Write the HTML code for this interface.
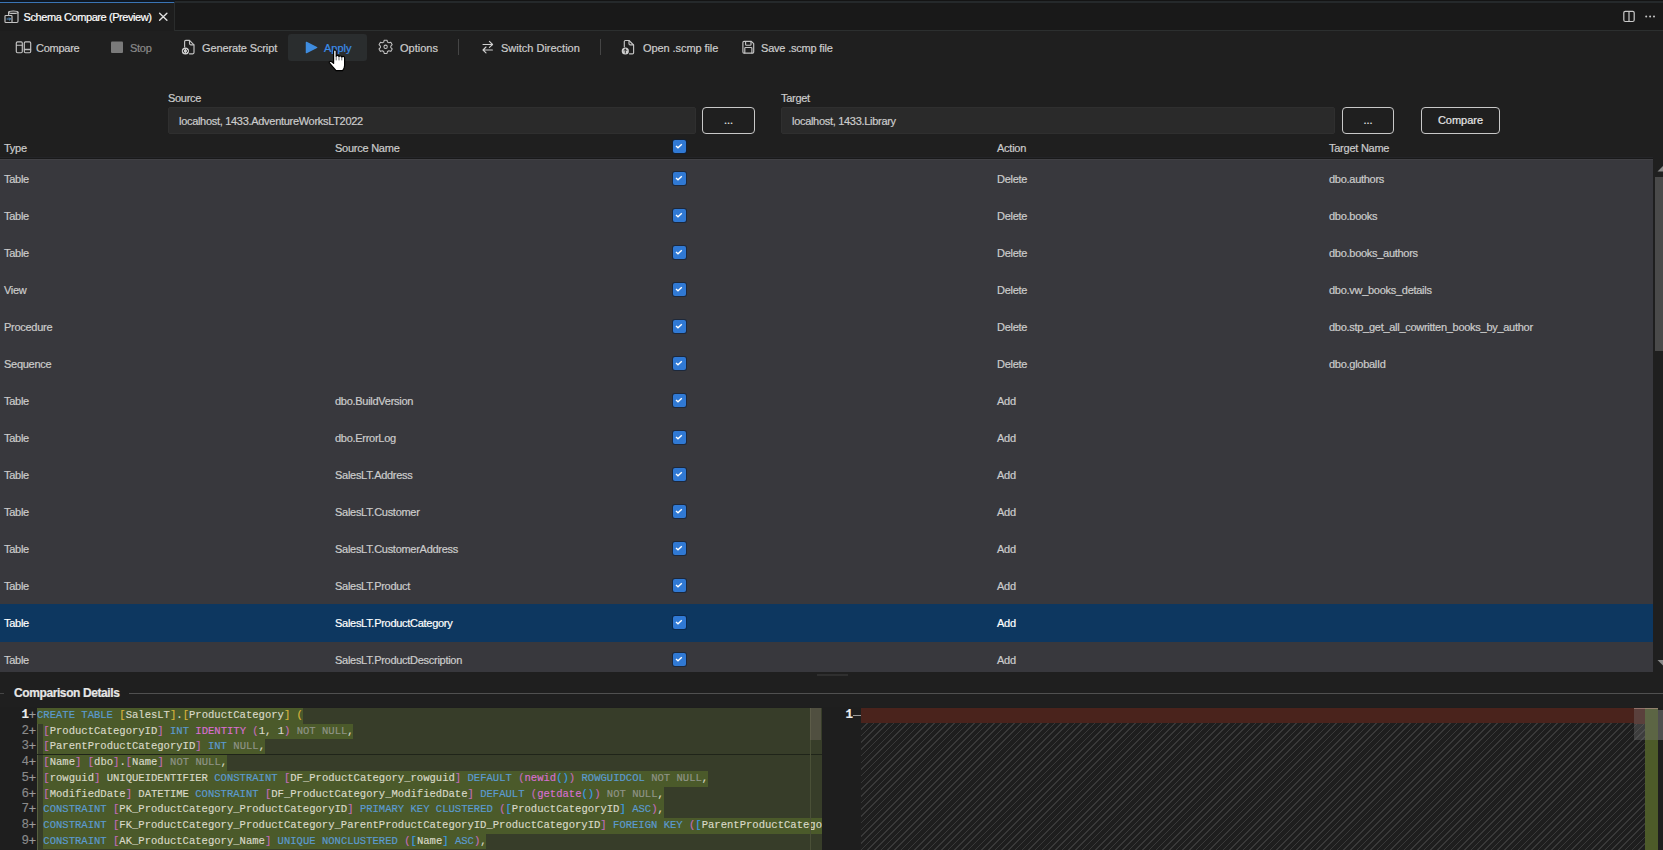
<!DOCTYPE html>
<html><head><meta charset="utf-8">
<style>
*{margin:0;padding:0;box-sizing:border-box}
html,body{width:1663px;height:850px;overflow:hidden;background:#1f1f1f;font-family:"Liberation Sans",sans-serif;color:#cccccc;font-size:11px}
.a,.tb,.lbl,.inp,.btn,.hdr,.row span{-webkit-text-stroke:0.2px currentColor}
.a{position:absolute;white-space:pre}
#tabbar{position:absolute;left:0;top:0;width:1663px;height:31px;background:#191919;border-top:1px solid #141414;border-bottom:1px solid #2c2f2f}
#tabline{position:absolute;left:0;top:1px;width:1663px;height:2px;background:#25292b}
#tab{position:absolute;left:0;top:0;width:175px;height:31px;background:#1d1d1d;border-top:3.5px solid #3a74b4;border-right:1px solid #2a2c2c}
#tabtop{position:absolute;left:0;top:0;width:175px;height:1.6px;background:#0f1722}
.tb{position:absolute;top:41px;height:14px;line-height:14px;color:#cccccc;font-size:11px}
.lbl{letter-spacing:-0.3px;position:absolute;top:91px;font-size:11px;line-height:14px;color:#cccccc}
.inp{letter-spacing:-0.3px;position:absolute;top:107px;height:27px;background:#2a2a2a;border:1px solid #2f2f2f;border-radius:2px;color:#cccccc;font-size:11px;line-height:26.5px;padding-left:10px}
.btn{position:absolute;top:107px;height:27px;border:1.6px solid #c8c8c8;border-radius:4px;background:#1f1f1f;color:#e6e6e6;font-size:11px;line-height:25px;text-align:center}
.hdr{letter-spacing:-0.25px;position:absolute;top:140.5px;line-height:14px;font-size:11px;color:#cccccc}
#rows{position:absolute;left:0;top:160px;width:1653px;height:512px;background:#38383d;overflow:hidden}
.row{position:absolute;left:0;width:1653px;height:37px}
.row span{letter-spacing:-0.28px;position:absolute;top:12px;line-height:14px;font-size:11px;color:#cccccc;white-space:pre}
.row.sel{background:#0d3760;height:38px}
.row.sel span{color:#ffffff}
.cb{position:absolute;width:13px;height:13px;background:#3079d4;border-radius:2px;box-shadow:0 0 0 1px rgba(10,30,60,0.6)}
.cb svg{position:absolute;left:2px;top:3px}
#code{position:absolute;left:0;top:707px;width:822px;height:143px;background:#1e1e1e;overflow:hidden}
#lbg{position:absolute;left:37px;top:1px;width:785px;height:142px;background:#373d29}
#iguide{position:absolute;left:37px;top:16.7px;width:1.2px;height:127px;background:#56603f}
.hl{position:absolute;height:15.72px;background:#4b5a2a}
.ln{-webkit-text-stroke:0.15px currentColor;position:absolute;left:0;width:822px;height:15.72px;font-family:"Liberation Mono",monospace;font-size:10.55px;line-height:15.72px;white-space:pre}
.ln .num{position:absolute;left:0;width:29px;text-align:right;font-size:12.5px}
.ln .plus{position:absolute;left:28.5px;color:#9a9a9a;font-size:13px}
.ln .txt{position:absolute;left:37px}
#sep1{position:absolute;left:37px;top:47px;width:785px;height:1px;background:#1f2419}
#lvs{position:absolute;left:810px;top:1px;width:1px;height:142px;background:#4a5037}
#lslider{position:absolute;left:810px;top:1px;width:11px;height:32px;background:rgba(130,115,110,0.35)}
#rpane{position:absolute;left:822px;top:707px;width:841px;height:143px;background:#1e1e1e;overflow:hidden}
#hatch{position:absolute;left:39px;top:15.7px;width:784px;height:128px;background:repeating-linear-gradient(-45deg,#393939 0px,#393939 1.1px,transparent 1.1px,transparent 4.74px)}
#redbar{position:absolute;left:39px;top:1px;width:773px;height:14.7px;background:#4a231c}
</style></head>
<body>
<div id="tabbar"></div><div id="tabline"></div>
<div id="tab"></div><div id="tabtop"></div>
<div class="a" style="left:23.5px;top:10px;font-size:11px;line-height:14px;color:#ffffff;letter-spacing:-0.42px">Schema Compare (Preview)</div>


<div class="a" style="left:288px;top:34px;width:79px;height:27px;background:#2a2d2e;border-radius:3px"></div>
<svg class="a" style="left:0;top:0" width="1663" height="75" viewBox="0 0 1663 75" fill="none" stroke-linecap="round" stroke-linejoin="round">
<!-- tab icon -->
<path d="M8.6 12.2 Q8.6 11 13.3 11 Q18 11 18 12.2 V21.3 Q18 22.5 16.8 22.5 H12" stroke="#c4c4c4" stroke-width="1.15"/>
<path d="M8.6 12.2 Q8.6 13.4 13.3 13.4 Q18 13.4 18 12.2" stroke="#c4c4c4" stroke-width="1.15"/>
<path d="M8.6 12.2 V15.5" stroke="#c4c4c4" stroke-width="1.15"/>
<rect x="5" y="15.5" width="7" height="7" rx="0.8" stroke="#c4c4c4" stroke-width="1.15"/>
<path d="M7 19 H10.5 M9.3 17.8 L10.5 19 L9.3 20.2" stroke="#5aa0e0" stroke-width="0.9"/>
<!-- tab close -->
<path d="M159.6 13.3 L166.9 20.3 M166.9 13.3 L159.6 20.3" stroke="#e0e0e0" stroke-width="1.4"/>
<!-- split editor -->
<rect x="1623.8" y="11.3" width="10.4" height="10.2" rx="1.5" stroke="#c8c8c8" stroke-width="1.2"/>
<path d="M1629 11.5 V21.3" stroke="#c8c8c8" stroke-width="1.2"/>
<circle cx="1646.2" cy="16.6" r="1" fill="#c8c8c8" stroke="none"/>
<circle cx="1650.1" cy="16.6" r="1" fill="#c8c8c8" stroke="none"/>
<circle cx="1654" cy="16.6" r="1" fill="#c8c8c8" stroke="none"/>
<!-- compare icon -->
<rect x="16.3" y="41.9" width="6" height="10.8" rx="1.2" stroke="#c4c4c4" stroke-width="1.15"/>
<path d="M16.5 45.2 H22.1" stroke="#c4c4c4" stroke-width="1.15"/>
<rect x="24.3" y="41.9" width="6.4" height="10.8" rx="1.2" stroke="#c4c4c4" stroke-width="1.15"/>
<path d="M24.5 49.5 H30.5" stroke="#bdbdbd" stroke-width="1.4"/>
<!-- stop -->
<rect x="111" y="41.5" width="12" height="11.6" rx="1" fill="#7a7a7a" stroke="none"/>
<!-- generate script -->
<path d="M184.6 47 V41.6 Q184.6 40.4 185.8 40.4 H189.5 L194 44.9 V52.6 Q194 53.8 192.8 53.8 H189.5" stroke="#c4c4c4" stroke-width="1.15"/>
<path d="M189.5 40.6 V43.6 Q189.5 44.8 190.7 44.8 H193.8" stroke="#c4c4c4" stroke-width="1.15"/>
<circle cx="185.4" cy="51" r="3.6" fill="#d0d0d0" stroke="none"/>
<path d="M184.3 49.5 L183 51 L184.3 52.5 M186.5 49.5 L187.8 51 L186.5 52.5" stroke="#1f1f1f" stroke-width="0.9"/>
<!-- apply play -->
<path d="M306.4 42.4 L316.7 47.5 L306.4 52.6 Z" fill="#3f8de0" stroke="#3f8de0" stroke-width="1.3"/>
<!-- gear -->
<g transform="translate(385.6 46.8) scale(0.88)">
<path d="M-1.6 -7.5 H1.6 L2.1 -5.4 L3.8 -4.5 L5.9 -5.2 L7.5 -2.4 L5.9 -0.9 V0.9 L7.5 2.4 L5.9 5.2 L3.8 4.5 L2.1 5.4 L1.6 7.5 H-1.6 L-2.1 5.4 L-3.8 4.5 L-5.9 5.2 L-7.5 2.4 L-5.9 0.9 V-0.9 L-7.5 -2.4 L-5.9 -5.2 L-3.8 -4.5 L-2.1 -5.4 Z" stroke="#c4c4c4" stroke-width="1.15"/>
<circle cx="0" cy="0" r="1.9" stroke="#c4c4c4" stroke-width="1.15"/>
</g>
<!-- switch direction -->
<path d="M483 44.5 H492.6 M489.4 41.4 L492.6 44.5 L489.4 47.4" stroke="#d0d0d0" stroke-width="1.1"/>
<path d="M492.4 50 H483 M486 47 L483 50 L486 52.9" stroke="#d0d0d0" stroke-width="1.1"/>
<!-- open scmp -->
<path d="M624.3 46.8 V41.6 Q624.3 40.5 625.4 40.5 H629 L633.6 45 V52.7 Q633.6 53.8 632.5 53.8 H629.5" stroke="#c4c4c4" stroke-width="1.15"/>
<path d="M629 40.7 V43.7 Q629 44.9 630.2 44.9 H633.4" stroke="#c4c4c4" stroke-width="1.15"/>
<circle cx="625.3" cy="51" r="3.6" fill="#d0d0d0" stroke="none"/>
<path d="M625.3 53 V49.2 M623.9 50.5 L625.3 49.1 L626.7 50.5" stroke="#1f1f1f" stroke-width="0.9"/>
<!-- save -->
<path d="M742.9 42.4 Q742.9 41.3 744 41.3 H751.3 L753.7 43.7 V52 Q753.7 53.1 752.6 53.1 H744 Q742.9 53.1 742.9 52 Z" stroke="#c4c4c4" stroke-width="1.15"/>
<path d="M745.6 41.5 V44.4 Q745.6 45.2 746.4 45.2 H750.2 Q751 45.2 751 44.4 V41.5" stroke="#c4c4c4" stroke-width="1.15"/>
<path d="M744.8 52.9 V48.3 Q744.8 47.5 745.6 47.5 H751.1 Q751.9 47.5 751.9 48.3 V52.9" stroke="#c4c4c4" stroke-width="1.15"/>
</svg>
<!-- toolbar -->
<div class="tb" style="left:36px;letter-spacing:-0.25px">Compare</div>
<div class="tb" style="left:130px;color:#8a8a8a;letter-spacing:-0.28px">Stop</div>
<div class="tb" style="left:202px;letter-spacing:-0.13px">Generate Script</div>
<div class="tb" style="left:324px;color:#3b8eea">Apply</div>
<div class="tb" style="left:400px">Options</div>
<div class="a" style="left:458px;top:39px;width:1px;height:16px;background:#454545"></div>
<div class="tb" style="left:501px">Switch Direction</div>
<div class="a" style="left:600px;top:39px;width:1px;height:16px;background:#454545"></div>
<div class="tb" style="left:643px;letter-spacing:-0.08px">Open .scmp file</div>
<div class="tb" style="left:761px;letter-spacing:-0.2px">Save .scmp file</div>

<div class="lbl" style="left:168px">Source</div>
<div class="inp" style="left:168px;width:528px">localhost, 1433.AdventureWorksLT2022</div>
<div class="btn" style="left:702px;width:53px">...</div>
<div class="lbl" style="left:781px">Target</div>
<div class="inp" style="left:781px;width:554px">localhost, 1433.Library</div>
<div class="btn" style="left:1342px;width:52px">...</div>
<div class="btn" style="left:1421px;width:79px">Compare</div>

<div class="hdr" style="left:4px">Type</div>
<div class="hdr" style="left:335px">Source Name</div>
<div class="cb" style="left:673px;top:140px"><svg width="9" height="7" viewBox="0 0 9 7"><path d="M1 3 L3 4.8 L6.8 1.2" fill="none" stroke="#fff" stroke-width="1.4"/></svg></div>
<div class="hdr" style="left:997px">Action</div>
<div class="hdr" style="left:1329px">Target Name</div>

<div class="a" style="left:0;top:157px;width:1653px;height:1px;background:#232427"></div><div class="a" style="left:0;top:158px;width:1653px;height:1px;background:#19191a"></div><div class="a" style="left:0;top:159px;width:1653px;height:1.5px;background:#414145"></div>
<div id="rows">
<div class="row" style="top:0px"><span style="left:4px">Table</span><div class="cb" style="left:673px;top:12px"><svg width="9" height="7" viewBox="0 0 9 7"><path d="M1 3 L3 4.8 L6.8 1.2" fill="none" stroke="#fff" stroke-width="1.4"/></svg></div><span style="left:997px">Delete</span><span style="left:1329px">dbo.authors</span></div>
<div class="row" style="top:37px"><span style="left:4px">Table</span><div class="cb" style="left:673px;top:12px"><svg width="9" height="7" viewBox="0 0 9 7"><path d="M1 3 L3 4.8 L6.8 1.2" fill="none" stroke="#fff" stroke-width="1.4"/></svg></div><span style="left:997px">Delete</span><span style="left:1329px">dbo.books</span></div>
<div class="row" style="top:74px"><span style="left:4px">Table</span><div class="cb" style="left:673px;top:12px"><svg width="9" height="7" viewBox="0 0 9 7"><path d="M1 3 L3 4.8 L6.8 1.2" fill="none" stroke="#fff" stroke-width="1.4"/></svg></div><span style="left:997px">Delete</span><span style="left:1329px">dbo.books_authors</span></div>
<div class="row" style="top:111px"><span style="left:4px">View</span><div class="cb" style="left:673px;top:12px"><svg width="9" height="7" viewBox="0 0 9 7"><path d="M1 3 L3 4.8 L6.8 1.2" fill="none" stroke="#fff" stroke-width="1.4"/></svg></div><span style="left:997px">Delete</span><span style="left:1329px">dbo.vw_books_details</span></div>
<div class="row" style="top:148px"><span style="left:4px">Procedure</span><div class="cb" style="left:673px;top:12px"><svg width="9" height="7" viewBox="0 0 9 7"><path d="M1 3 L3 4.8 L6.8 1.2" fill="none" stroke="#fff" stroke-width="1.4"/></svg></div><span style="left:997px">Delete</span><span style="left:1329px">dbo.stp_get_all_cowritten_books_by_author</span></div>
<div class="row" style="top:185px"><span style="left:4px">Sequence</span><div class="cb" style="left:673px;top:12px"><svg width="9" height="7" viewBox="0 0 9 7"><path d="M1 3 L3 4.8 L6.8 1.2" fill="none" stroke="#fff" stroke-width="1.4"/></svg></div><span style="left:997px">Delete</span><span style="left:1329px">dbo.globalId</span></div>
<div class="row" style="top:222px"><span style="left:4px">Table</span><span style="left:335px">dbo.BuildVersion</span><div class="cb" style="left:673px;top:12px"><svg width="9" height="7" viewBox="0 0 9 7"><path d="M1 3 L3 4.8 L6.8 1.2" fill="none" stroke="#fff" stroke-width="1.4"/></svg></div><span style="left:997px">Add</span></div>
<div class="row" style="top:259px"><span style="left:4px">Table</span><span style="left:335px">dbo.ErrorLog</span><div class="cb" style="left:673px;top:12px"><svg width="9" height="7" viewBox="0 0 9 7"><path d="M1 3 L3 4.8 L6.8 1.2" fill="none" stroke="#fff" stroke-width="1.4"/></svg></div><span style="left:997px">Add</span></div>
<div class="row" style="top:296px"><span style="left:4px">Table</span><span style="left:335px">SalesLT.Address</span><div class="cb" style="left:673px;top:12px"><svg width="9" height="7" viewBox="0 0 9 7"><path d="M1 3 L3 4.8 L6.8 1.2" fill="none" stroke="#fff" stroke-width="1.4"/></svg></div><span style="left:997px">Add</span></div>
<div class="row" style="top:333px"><span style="left:4px">Table</span><span style="left:335px">SalesLT.Customer</span><div class="cb" style="left:673px;top:12px"><svg width="9" height="7" viewBox="0 0 9 7"><path d="M1 3 L3 4.8 L6.8 1.2" fill="none" stroke="#fff" stroke-width="1.4"/></svg></div><span style="left:997px">Add</span></div>
<div class="row" style="top:370px"><span style="left:4px">Table</span><span style="left:335px">SalesLT.CustomerAddress</span><div class="cb" style="left:673px;top:12px"><svg width="9" height="7" viewBox="0 0 9 7"><path d="M1 3 L3 4.8 L6.8 1.2" fill="none" stroke="#fff" stroke-width="1.4"/></svg></div><span style="left:997px">Add</span></div>
<div class="row" style="top:407px"><span style="left:4px">Table</span><span style="left:335px">SalesLT.Product</span><div class="cb" style="left:673px;top:12px"><svg width="9" height="7" viewBox="0 0 9 7"><path d="M1 3 L3 4.8 L6.8 1.2" fill="none" stroke="#fff" stroke-width="1.4"/></svg></div><span style="left:997px">Add</span></div>
<div class="row sel" style="top:444px"><span style="left:4px">Table</span><span style="left:335px">SalesLT.ProductCategory</span><div class="cb" style="left:673px;top:12px"><svg width="9" height="7" viewBox="0 0 9 7"><path d="M1 3 L3 4.8 L6.8 1.2" fill="none" stroke="#fff" stroke-width="1.4"/></svg></div><span style="left:997px">Add</span></div>
<div class="row" style="top:481px"><span style="left:4px">Table</span><span style="left:335px">SalesLT.ProductDescription</span><div class="cb" style="left:673px;top:12px"><svg width="9" height="7" viewBox="0 0 9 7"><path d="M1 3 L3 4.8 L6.8 1.2" fill="none" stroke="#fff" stroke-width="1.4"/></svg></div><span style="left:997px">Add</span></div>
</div><!--/rows-->

<div class="a" style="left:1653px;top:160px;width:10px;height:512px;background:#1f1f1f"></div>
<div class="a" style="left:1655px;top:177px;width:8px;height:174px;background:#4a4a4a"></div>
<svg class="a" style="left:1653px;top:163px" width="10" height="10" viewBox="0 0 10 10"><path d="M4.5 8.5 L10 3 L15.5 8.5 Z" fill="#8a8a8a"/></svg>
<svg class="a" style="left:1653px;top:657px" width="10" height="10" viewBox="0 0 10 10"><path d="M4.5 3 L10 8.5 L15.5 3 Z" fill="#8a8a8a"/></svg>
<div class="a" style="left:817px;top:674px;width:31px;height:2px;background:#2f2f2f"></div>
<div class="a" style="left:14px;top:686px;font-size:12px;font-weight:bold;line-height:14px;color:#e6e6e6;letter-spacing:-0.4px">Comparison Details</div>
<div class="a" style="left:0;top:693px;width:4px;height:1px;background:#454545"></div>
<div class="a" style="left:129px;top:692.5px;width:1534px;height:1.5px;background:#505050"></div>

<div id="code">
<div id="lbg"></div><div id="iguide"></div>
<div class="hl" style="top:1.00px;left:37.00px;width:265.86px"></div>
<div class="ln" style="top:1.00px"><span class="num" style="color:#ececec;font-weight:bold">1</span><span class="plus">+</span><span class="txt"><span style="color:#5b9bd0">CREATE TABLE</span><span style="color:#d9d9c8"> </span><span style="color:#d9b53c">[</span><span style="color:#d9d9c8">SalesLT</span><span style="color:#d9b53c">]</span><span style="color:#d9d9c8">.</span><span style="color:#d9b53c">[</span><span style="color:#d9d9c8">ProductCategory</span><span style="color:#d9b53c">]</span><span style="color:#d9d9c8"> </span><span style="color:#d9b53c">(</span></span></div>
<div class="hl" style="top:16.72px;left:43.33px;width:310.17px"></div>
<div class="ln" style="top:16.72px"><span class="num" style="color:#8a8a8a">2</span><span class="plus">+</span><span class="txt"><span style="color:#d9d9c8"> </span><span style="color:#c36dbb">[</span><span style="color:#d9d9c8">ProductCategoryID</span><span style="color:#c36dbb">]</span><span style="color:#d9d9c8"> </span><span style="color:#5b9bd0">INT</span><span style="color:#d9d9c8"> </span><span style="color:#d86fd0">IDENTITY</span><span style="color:#d9d9c8"> </span><span style="color:#c36dbb">(</span><span style="color:#d9d9c8">1, 1</span><span style="color:#c36dbb">)</span><span style="color:#d9d9c8"> </span><span style="color:#8f9487">NOT NULL</span><span style="color:#d9d9c8">,</span></span></div>
<div class="hl" style="top:32.44px;left:43.33px;width:221.55px"></div>
<div class="ln" style="top:32.44px"><span class="num" style="color:#8a8a8a">3</span><span class="plus">+</span><span class="txt"><span style="color:#d9d9c8"> </span><span style="color:#c36dbb">[</span><span style="color:#d9d9c8">ParentProductCategoryID</span><span style="color:#c36dbb">]</span><span style="color:#d9d9c8"> </span><span style="color:#5b9bd0">INT</span><span style="color:#d9d9c8"> </span><span style="color:#8f9487">NULL</span><span style="color:#d9d9c8">,</span></span></div>
<div class="hl" style="top:48.16px;left:43.33px;width:183.57px"></div>
<div class="ln" style="top:48.16px"><span class="num" style="color:#8a8a8a">4</span><span class="plus">+</span><span class="txt"><span style="color:#d9d9c8"> </span><span style="color:#c36dbb">[</span><span style="color:#d9d9c8">Name</span><span style="color:#c36dbb">]</span><span style="color:#d9d9c8"> </span><span style="color:#c36dbb">[</span><span style="color:#d9d9c8">dbo</span><span style="color:#c36dbb">]</span><span style="color:#d9d9c8">.</span><span style="color:#c36dbb">[</span><span style="color:#d9d9c8">Name</span><span style="color:#c36dbb">]</span><span style="color:#d9d9c8"> </span><span style="color:#8f9487">NOT NULL</span><span style="color:#d9d9c8">,</span></span></div>
<div class="hl" style="top:63.88px;left:43.33px;width:664.65px"></div>
<div class="ln" style="top:63.88px"><span class="num" style="color:#8a8a8a">5</span><span class="plus">+</span><span class="txt"><span style="color:#d9d9c8"> </span><span style="color:#c36dbb">[</span><span style="color:#d9d9c8">rowguid</span><span style="color:#c36dbb">]</span><span style="color:#d9d9c8"> UNIQUEIDENTIFIER </span><span style="color:#5b9bd0">CONSTRAINT</span><span style="color:#d9d9c8"> </span><span style="color:#c36dbb">[</span><span style="color:#d9d9c8">DF_ProductCategory_rowguid</span><span style="color:#c36dbb">]</span><span style="color:#d9d9c8"> </span><span style="color:#5b9bd0">DEFAULT</span><span style="color:#d9d9c8"> </span><span style="color:#c36dbb">(</span><span style="color:#d86fd0">newid</span><span style="color:#3a9ee8">()</span><span style="color:#c36dbb">)</span><span style="color:#d9d9c8"> </span><span style="color:#5b9bd0">ROWGUIDCOL</span><span style="color:#d9d9c8"> </span><span style="color:#8f9487">NOT NULL</span><span style="color:#d9d9c8">,</span></span></div>
<div class="hl" style="top:79.60px;left:43.33px;width:620.34px"></div>
<div class="ln" style="top:79.60px"><span class="num" style="color:#8a8a8a">6</span><span class="plus">+</span><span class="txt"><span style="color:#d9d9c8"> </span><span style="color:#c36dbb">[</span><span style="color:#d9d9c8">ModifiedDate</span><span style="color:#c36dbb">]</span><span style="color:#d9d9c8"> DATETIME </span><span style="color:#5b9bd0">CONSTRAINT</span><span style="color:#d9d9c8"> </span><span style="color:#c36dbb">[</span><span style="color:#d9d9c8">DF_ProductCategory_ModifiedDate</span><span style="color:#c36dbb">]</span><span style="color:#d9d9c8"> </span><span style="color:#5b9bd0">DEFAULT</span><span style="color:#d9d9c8"> </span><span style="color:#c36dbb">(</span><span style="color:#d86fd0">getdate</span><span style="color:#3a9ee8">()</span><span style="color:#c36dbb">)</span><span style="color:#d9d9c8"> </span><span style="color:#8f9487">NOT NULL</span><span style="color:#d9d9c8">,</span></span></div>
<div class="hl" style="top:95.32px;left:43.33px;width:620.34px"></div>
<div class="ln" style="top:95.32px"><span class="num" style="color:#8a8a8a">7</span><span class="plus">+</span><span class="txt"><span style="color:#d9d9c8"> </span><span style="color:#5b9bd0">CONSTRAINT</span><span style="color:#d9d9c8"> </span><span style="color:#c36dbb">[</span><span style="color:#d9d9c8">PK_ProductCategory_ProductCategoryID</span><span style="color:#c36dbb">]</span><span style="color:#d9d9c8"> </span><span style="color:#5b9bd0">PRIMARY KEY CLUSTERED</span><span style="color:#d9d9c8"> </span><span style="color:#c36dbb">(</span><span style="color:#3a9ee8">[</span><span style="color:#d9d9c8">ProductCategoryID</span><span style="color:#3a9ee8">]</span><span style="color:#d9d9c8"> </span><span style="color:#5b9bd0">ASC</span><span style="color:#c36dbb">)</span><span style="color:#d9d9c8">,</span></span></div>
<div class="hl" style="top:111.04px;left:43.33px;width:1209.03px"></div>
<div class="ln" style="top:111.04px"><span class="num" style="color:#8a8a8a">8</span><span class="plus">+</span><span class="txt"><span style="color:#d9d9c8"> </span><span style="color:#5b9bd0">CONSTRAINT</span><span style="color:#d9d9c8"> </span><span style="color:#c36dbb">[</span><span style="color:#d9d9c8">FK_ProductCategory_ProductCategory_ParentProductCategoryID_ProductCategoryID</span><span style="color:#c36dbb">]</span><span style="color:#d9d9c8"> </span><span style="color:#5b9bd0">FOREIGN KEY</span><span style="color:#d9d9c8"> </span><span style="color:#c36dbb">(</span><span style="color:#3a9ee8">[</span><span style="color:#d9d9c8">ParentProductCategoryID</span><span style="color:#3a9ee8">]</span><span style="color:#c36dbb">)</span><span style="color:#d9d9c8"> </span><span style="color:#5b9bd0">REFERENCES</span><span style="color:#d9d9c8"> </span><span style="color:#d9d9c8">[SalesLT].[ProductCategory] ([ProductCategoryID]),</span></span></div>
<div class="hl" style="top:126.76px;left:43.33px;width:443.10px"></div>
<div class="ln" style="top:126.76px"><span class="num" style="color:#8a8a8a">9</span><span class="plus">+</span><span class="txt"><span style="color:#d9d9c8"> </span><span style="color:#5b9bd0">CONSTRAINT</span><span style="color:#d9d9c8"> </span><span style="color:#c36dbb">[</span><span style="color:#d9d9c8">AK_ProductCategory_Name</span><span style="color:#c36dbb">]</span><span style="color:#d9d9c8"> </span><span style="color:#5b9bd0">UNIQUE NONCLUSTERED</span><span style="color:#d9d9c8"> </span><span style="color:#c36dbb">(</span><span style="color:#3a9ee8">[</span><span style="color:#d9d9c8">Name</span><span style="color:#3a9ee8">]</span><span style="color:#d9d9c8"> </span><span style="color:#5b9bd0">ASC</span><span style="color:#c36dbb">)</span><span style="color:#d9d9c8">,</span></span></div>
<div id="sep1"></div><div id="lvs"></div><div id="lslider"></div>
</div><!--/code-->
<div id="rpane"><div id="hatch"></div><div id="redbar"></div><div class="a" style="left:823px;top:1px;width:13px;height:142px;background:#4d5b29"></div><div class="a" style="left:812px;top:1px;width:11px;height:15.7px;background:#4a231c"></div><div class="a" style="left:836px;top:3px;width:5px;height:30px;background:#4f4f4f"></div><div class="a" style="left:812px;top:1px;width:24px;height:32px;background:rgba(121,121,121,0.35);border-top:1px solid rgba(200,160,150,0.5)"></div><div class="a" style="left:23.5px;top:1px;font-family:'Liberation Mono',monospace;font-size:12.5px;line-height:15.7px;color:#ececec;font-weight:bold">1</div><div class="a" style="left:31px;top:8px;width:8px;height:1px;background:#9a9a9a"></div></div>
<svg class="a" style="left:0;top:0" width="400" height="80" viewBox="0 0 400 80" fill="none" stroke-linecap="round" stroke-linejoin="round"><!-- hand cursor -->
<path d="M333.6 51.2 Q333.6 49.9 334.9 49.9 Q336.2 49.9 336.2 51.2 V56.2 Q336.4 55.4 337.6 55.4 Q338.9 55.4 339 56.4 Q339.3 55.8 340.4 55.8 Q341.7 55.8 341.8 57 Q342.1 56.4 343.2 56.4 Q344.6 56.4 344.6 57.8 V65.5 Q344.6 68.5 342.6 70.6 H336 Q334.6 68.8 332.6 66.6 L329.4 62.9 Q328.9 62 329.8 61.5 Q330.9 61 332.2 62.1 L333.6 63.4 Z" fill="#ffffff" stroke="#000000" stroke-width="1.2"/>
<path d="M336.2 56.3 V60 M339 56.6 V60 M341.8 57.2 V60" stroke="#000" stroke-width="0.6"/>
</svg>
</body></html>
